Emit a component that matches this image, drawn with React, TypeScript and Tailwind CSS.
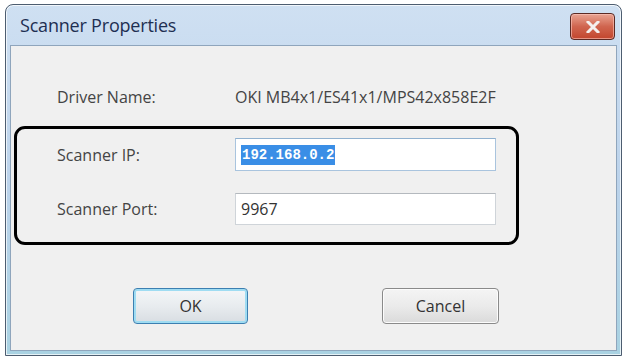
import React from 'react';

export default function App() {
  return (
    <div className="w-[625px] h-[357px] bg-white pt-[4px] pl-[5px] overflow-hidden" style={{ fontFamily: '"Open Sans", "Liberation Sans", sans-serif' }}>
      {/* window frame */}
      <div className="w-[617px] h-[352px] rounded-t-[8px] border border-[#4d5d70] bg-gradient-to-b from-[#cfe0f2] via-[#bcd3eb] to-[#a9d2e2] flex flex-col px-[4px] pb-[4px] shadow-[inset_0_0_0_1px_rgba(255,255,255,0.7)]">
        {/* title bar */}
        <div className="h-[40px] flex items-center justify-between pl-[10px] pr-[2px] shrink-0">
          <span className="text-[18px] text-[#1e2f52] tracking-[-0.2px] mt-[1px]">Scanner Properties</span>
          <div className="w-[45px] h-[27px] mt-[3px] rounded-[4px] border border-[#5b2a24] bg-gradient-to-b from-[#e8a493] via-[#d0654f] to-[#c2452d] flex items-center justify-center shadow-[inset_0_0_0_1px_rgba(255,200,190,0.6)]">
            <svg width="14" height="12" viewBox="0 0 14 12">
              <path d="M2 1 L12 11 M12 1 L2 11" stroke="#f4f0ee" strokeWidth="3" strokeLinecap="square" />
            </svg>
          </div>
        </div>

        {/* client area */}
        <div className="flex-1 bg-[#f0f0f0] border border-[#8fa5bc] flex flex-col px-[3px]">
          <div className="flex items-center h-[22px] mt-[40px] pl-[43px] text-[16px] text-[#444]">
            <span className="w-[178px]">Driver Name:</span>
            <span>OKI MB4x1/ES41x1/MPS42x858E2F</span>
          </div>

          <div className="mt-[18px] w-[505px] h-[119px] border-[3px] border-black rounded-[11px] flex flex-col pl-[40px] pt-[9px]">
            <div className="flex items-center h-[33px]">
              <span className="w-[178px] text-[16px] text-[#444]">Scanner IP:</span>
              <div className="w-[261px] h-[33px] bg-white border border-[#a9c4de] border-t-[#8fb0cf] flex items-center pl-[5px]">
                <span className="bg-[#3a8ee6] text-white text-[14px] font-bold leading-[20px] px-[1px]" style={{ fontFamily: '"Liberation Mono", monospace' }}>192.168.0.2</span>
              </div>
            </div>
            <div className="flex items-center h-[32px] mt-[22px]">
              <span className="w-[178px] text-[16px] text-[#444]">Scanner Port:</span>
              <div className="w-[261px] h-[32px] bg-white border border-[#cfd4d9] border-t-[#b4b9be] flex items-center pl-[5px]">
                <span className="text-[16px] text-[#333]">9967</span>
              </div>
            </div>
          </div>

          <div className="flex mt-[43px] pl-[119px] gap-[134px]">
            <button className="w-[115px] h-[36px] rounded-[4px] border border-[#3c7fb1] bg-gradient-to-b from-[#f4f6f8] via-[#e8ecef] to-[#d8dde2] text-[16px] text-[#333] shadow-[inset_0_0_0_2px_#9fdcf2]">OK</button>
            <button className="w-[117px] h-[36px] rounded-[4px] border border-[#8a8a8a] bg-gradient-to-b from-[#f4f4f4] via-[#ebebeb] to-[#dadada] text-[16px] text-[#333] shadow-[inset_0_0_0_1px_#fcfcfc]">Cancel</button>
          </div>
        </div>
      </div>
    </div>
  );
}
